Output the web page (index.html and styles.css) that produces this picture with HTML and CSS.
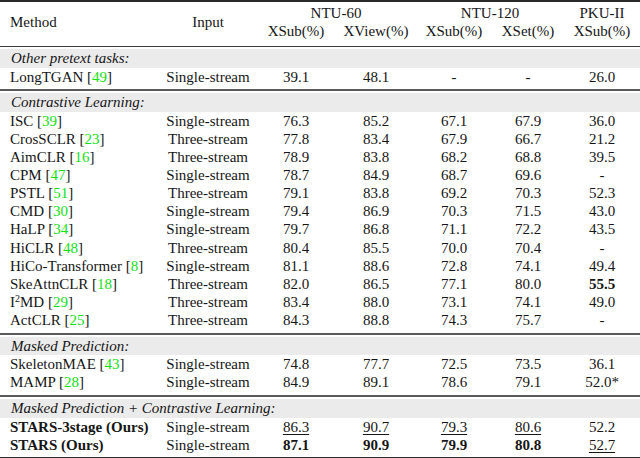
FILE: index.html
```html
<!DOCTYPE html>
<html>
<head>
<meta charset="utf-8">
<link rel="stylesheet" href="styles.css">
</head>
<body>
<div class="table">
  <div class="head">
    <div class="h-method">Method</div>
    <div class="h-input">Input</div>
    <div class="h-group g-ntu60">NTU-60</div>
    <div class="h-group g-ntu120">NTU-120</div>
    <div class="h-group g-pku">PKU-II</div>
    <div class="h-sub">XSub(%)</div>
    <div class="h-sub">XView(%)</div>
    <div class="h-sub">XSub(%)</div>
    <div class="h-sub">XSet(%)</div>
    <div class="h-sub">XSub(%)</div>
  </div>

  <div class="section first">
    <div class="band">Other pretext tasks:</div>
    <div class="row"><div class="m">LongTGAN [<span class="cite">49</span>]</div><div>Single-stream</div><div>39.1</div><div>48.1</div><div>-</div><div>-</div><div>26.0</div></div>
  </div>

  <div class="section">
    <div class="band">Contrastive Learning:</div>
    <div class="row"><div class="m">ISC [<span class="cite">39</span>]</div><div>Single-stream</div><div>76.3</div><div>85.2</div><div>67.1</div><div>67.9</div><div>36.0</div></div>
    <div class="row"><div class="m">CrosSCLR [<span class="cite">23</span>]</div><div>Three-stream</div><div>77.8</div><div>83.4</div><div>67.9</div><div>66.7</div><div>21.2</div></div>
    <div class="row"><div class="m">AimCLR [<span class="cite">16</span>]</div><div>Three-stream</div><div>78.9</div><div>83.8</div><div>68.2</div><div>68.8</div><div>39.5</div></div>
    <div class="row"><div class="m">CPM [<span class="cite">47</span>]</div><div>Single-stream</div><div>78.7</div><div>84.9</div><div>68.7</div><div>69.6</div><div>-</div></div>
    <div class="row"><div class="m">PSTL [<span class="cite">51</span>]</div><div>Three-stream</div><div>79.1</div><div>83.8</div><div>69.2</div><div>70.3</div><div>52.3</div></div>
    <div class="row"><div class="m">CMD [<span class="cite">30</span>]</div><div>Single-stream</div><div>79.4</div><div>86.9</div><div>70.3</div><div>71.5</div><div>43.0</div></div>
    <div class="row"><div class="m">HaLP [<span class="cite">34</span>]</div><div>Single-stream</div><div>79.7</div><div>86.8</div><div>71.1</div><div>72.2</div><div>43.5</div></div>
    <div class="row"><div class="m">HiCLR [<span class="cite">48</span>]</div><div>Three-stream</div><div>80.4</div><div>85.5</div><div>70.0</div><div>70.4</div><div>-</div></div>
    <div class="row"><div class="m">HiCo-Transformer [<span class="cite">8</span>]</div><div>Single-stream</div><div>81.1</div><div>88.6</div><div>72.8</div><div>74.1</div><div>49.4</div></div>
    <div class="row"><div class="m">SkeAttnCLR [<span class="cite">18</span>]</div><div>Three-stream</div><div>82.0</div><div>86.5</div><div>77.1</div><div>80.0</div><div><b>55.5</b></div></div>
    <div class="row"><div class="m">I<sup>2</sup>MD [<span class="cite">29</span>]</div><div>Three-stream</div><div>83.4</div><div>88.0</div><div>73.1</div><div>74.1</div><div>49.0</div></div>
    <div class="row"><div class="m">ActCLR [<span class="cite">25</span>]</div><div>Three-stream</div><div>84.3</div><div>88.8</div><div>74.3</div><div>75.7</div><div>-</div></div>
  </div>

  <div class="section">
    <div class="band">Masked Prediction:</div>
    <div class="row"><div class="m">SkeletonMAE [<span class="cite">43</span>]</div><div>Single-stream</div><div>74.8</div><div>77.7</div><div>72.5</div><div>73.5</div><div>36.1</div></div>
    <div class="row"><div class="m">MAMP [<span class="cite">28</span>]</div><div>Single-stream</div><div>84.9</div><div>89.1</div><div>78.6</div><div>79.1</div><div>52.0*</div></div>
  </div>

  <div class="section">
    <div class="band">Masked Prediction + Contrastive Learning:</div>
    <div class="row"><div class="m"><b>STARS-3stage (Ours)</b></div><div>Single-stream</div><div><u>86.3</u></div><div><u>90.7</u></div><div><u>79.3</u></div><div><u>80.6</u></div><div>52.2</div></div>
    <div class="row"><div class="m"><b>STARS (Ours)</b></div><div>Single-stream</div><div><b>87.1</b></div><div><b>90.9</b></div><div><b>79.9</b></div><div><b>80.8</b></div><div><u>52.7</u></div></div>
  </div>
</div>
</body>
</html>
```

FILE: styles.css
```css
html, body {
  margin: 0;
  padding: 0;
  background: #ffffff;
}

body {
  font-family: "Liberation Serif", "Times New Roman", serif;
  font-size: 15px;
  color: #161616;
  width: 640px;
  height: 458px;
  overflow: hidden;
}

.table {
  width: 640px;
  border-top: 2px solid #2a2a2a;
  border-bottom: 2px solid #2a2a2a;
}

.head,
.row {
  display: grid;
  grid-template-columns: 160px 96px 80px 80px 76px 72px 76px;
}

.head {
  grid-template-rows: 18px 18px;
  padding: 2px 0 6px;
  border-bottom: 1px solid #3a3a3a;
  line-height: 18px;
}

.h-method {
  grid-column: 1;
  grid-row: 1 / 3;
  align-self: center;
  padding-left: 10px;
}

.h-input {
  grid-column: 2;
  grid-row: 1 / 3;
  align-self: center;
  text-align: center;
}

.h-group {
  grid-row: 1;
  text-align: center;
}

.g-ntu60 { grid-column: 3 / 5; }
.g-ntu120 { grid-column: 5 / 7; }
.g-pku { grid-column: 7; }

.h-sub {
  grid-row: 2;
  text-align: center;
}

.section {
  padding: 2px 0 3.5px;
  border-top: 2px solid #5a5a5a;
}

.section.first {
  border-top: none;
}

.band {
  height: 18.5px;
  line-height: 18.5px;
  background: #ebebeb;
  font-style: italic;
  padding-left: 11px;
}

.row {
  height: 18.15px;
  line-height: 18.15px;
  text-align: center;
}

.row .m {
  text-align: left;
  padding-left: 10px;
  white-space: nowrap;
}

.cite {
  color: #14e014;
}

sup {
  font-size: 10px;
  line-height: 0;
  vertical-align: 5px;
}

u {
  text-decoration: underline;
  text-decoration-thickness: 1px;
  text-underline-offset: 2px;
}

b {
  font-weight: bold;
}
```
